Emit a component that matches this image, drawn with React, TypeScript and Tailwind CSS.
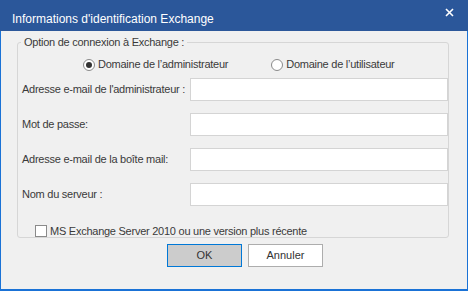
import React from "react";

const font = { fontFamily: '"Liberation Sans", Arial, sans-serif' };

function Field({ label }: { label: string }) {
  return (
    <div className="flex h-[23px] items-center">
      <span className="w-[172px] pl-[4px] text-[11px] tracking-[-0.25px] text-[#3a3a3a]">{label}</span>
      <div className="h-[23px] flex-1 border border-[#d4d4d4] bg-white" />
    </div>
  );
}

function Radio({ checked, label }: { checked?: boolean; label: string }) {
  return (
    <label className="flex items-center gap-[3px] text-[11px] tracking-[-0.25px] text-[#3a3a3a]">
      <span className="flex h-[12px] w-[12px] items-center justify-center rounded-full border border-[#8a8a8a] bg-white">
        {checked && <span className="h-[6px] w-[6px] rounded-full bg-[#333]" />}
      </span>
      {label}
    </label>
  );
}

export default function App() {
  return (
    <div className="h-[292px] w-[470px] bg-white" style={font}>
      <div className="flex h-[291px] w-[468px] flex-col">
        <div className="flex h-[31px] items-center justify-between bg-[#2b579a] pl-[12px] pr-[14px] text-white">
          <span className="pt-[6px] text-[12px]">Informations d'identification Exchange</span>
          <svg width="9" height="9" viewBox="0 0 9 9" className="mb-[6px]">
            <path d="M1 1L8 8M8 1L1 8" stroke="white" strokeWidth="1.6" />
          </svg>
        </div>
        <div className="flex flex-1 flex-col border-x border-b-2 border-[#1a72d6] border-t-0 bg-[#f0f0f0] pl-[16px]">
          <div className="relative mt-[11px] h-[196px] w-[432px] rounded-[3px] border border-[#d6d6d6]">
            <span className="absolute left-[3px] top-[-9px] bg-[#f0f0f0] px-[3px] text-[11px] tracking-[-0.25px] text-[#3a3a3a]">
              Option de connexion à Exchange :
            </span>
            <div className="mt-[15px] flex h-[13px] items-center">
              <div className="ml-[65px]">
                <Radio checked label="Domaine de l’administrateur" />
              </div>
              <div className="ml-[43px]">
                <Radio label="Domaine de l’utilisateur" />
              </div>
            </div>
            <div className="mt-[7px] flex flex-col gap-[12px]">
              <Field label="Adresse e-mail de l'administrateur :" />
              <Field label="Mot de passe:" />
              <Field label="Adresse e-mail de la boîte mail:" />
              <Field label="Nom du serveur :" />
            </div>
            <label className="ml-[17px] mt-[17px] flex items-center gap-[3px] text-[11px] tracking-[-0.25px] text-[#3a3a3a]">
              <span className="h-[12px] w-[12px] border border-[#8a8a8a] bg-white" />
              MS Exchange Server 2010 ou une version plus récente
            </label>
          </div>
          <div className="ml-[150px] mt-[6px] flex gap-[6px]">
            <button className="h-[23px] w-[75px] border border-[#0078d7] bg-[#cccccc] text-[11px] text-[#333]">OK</button>
            <button className="h-[23px] w-[75px] border border-[#adadad] bg-white text-[11px] text-[#333]">Annuler</button>
          </div>
        </div>
      </div>
    </div>
  );
}
